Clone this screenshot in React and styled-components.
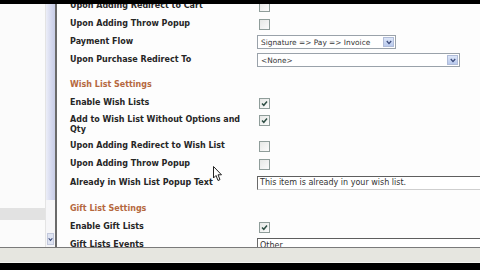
import React from "react";
import styled, { createGlobalStyle } from "styled-components";

const Global = createGlobalStyle`
  html, body { margin: 0; padding: 0; background: #000; overflow: hidden; }
  #root { width: 480px; height: 270px; }
`;

const Frame = styled.div`
  width: 480px; height: 270px; display: flex; flex-direction: column; background: #000;
  font-family: "DejaVu Sans", Verdana, sans-serif; position: relative;
`;
const BlackBar = styled.div` height: ${p => p.$h}px; background: #000; flex: none; `;
const Window = styled.div` flex: none; height: 243px; display: flex; overflow: hidden; `;
const LeftPane = styled.div`
  width: 46px; flex: none; background: #fbfbfb; border-right: 1px solid #e4e4e4;
  display: flex; flex-direction: column; padding-top: 200px; box-sizing: border-box;
`;
const Selected = styled.div` height: 12px; background: #e2e2e2; margin-top: 4px; `;
const ScrollCol = styled.div`
  width: 9px; flex: none; border-right: 2px solid #6a6a6a; background: #f6f6f8;
  display: flex; flex-direction: column; justify-content: space-between; padding-bottom: 2px;
`;
const Thumb = styled.div`
  height: 196px; background: linear-gradient(90deg, #eceef8, #d4d8ee 60%, #c8cde6);
`;
const ArrowBtn = styled.div`
  height: 10px; margin: 0 1px; background: #dfe4f2; border: 1px solid #c2c8dc;
  display: flex; align-items: center; justify-content: center;
`;
const Content = styled.div`
  flex: 1; background: #fdfdfd; overflow: hidden; padding-left: 13px;
`;
const List = styled.div` margin-top: -7px; display: flex; flex-direction: column; `;
const Row = styled.div`
  display: grid; grid-template-columns: 187px 1fr; align-items: ${p => p.$top ? "start" : "center"};
  height: ${p => p.$h || 18}px; box-sizing: border-box; padding-top: ${p => p.$pt || 0}px;
`;
const Label = styled.div`
  font-weight: bold; font-size: 8px; line-height: 10px; color: #262626; padding-right: 12px;
`;
const Header = styled.div`
  height: ${p => p.$h}px; display: flex; align-items: flex-end; padding-bottom: 4px; box-sizing: border-box;
  font-weight: bold; font-size: 8px; line-height: 10px; color: #b5683f;
`;
const Box = styled.div`
  width: 9px; height: 9px; margin-left: 2px; border: 1px solid #8f9d9a;
  background: linear-gradient(135deg, #e6e8e6, #fbfbfb); display: flex; align-items: center; justify-content: center;
`;
const Select = styled.div`
  width: ${p => p.$w}px; height: 14px; box-sizing: border-box; border: 1px solid #9aa2aa; background: #fff;
  display: flex; align-items: center; justify-content: space-between;
  font-size: 7.4px; color: #333; padding-left: 3px;
`;
const DropBtn = styled.div`
  width: 11px; height: 10px; margin-right: 1px; background: linear-gradient(#dde6f8, #b9c9ec);
  border: 1px solid #b0bcd8; box-sizing: border-box; display: flex; align-items: center; justify-content: center;
`;
const TextInput = styled.div`
  height: 14px; box-sizing: border-box; border: 1px solid #cfcfcf; border-top: 1px solid #5e5e5e;
  border-left: 1px solid #6a6a6a; background: #fff; font-size: 8px; color: #333; padding-left: 2px;
  display: flex; align-items: center; white-space: nowrap; overflow: hidden; margin-right: -20px;
`;
const Status = styled.div`
  flex: none; height: 16px; background: #e6e6e0; border-top: 1px solid #7a7a7a; border-bottom: 1px solid #f4f4f0; box-sizing: border-box;
`;
const Cursor = styled.svg` position: absolute; left: 213px; top: 166px; `;

const Check = ({ on }) => (
  <Box>
    {on && (
      <svg width="7" height="7" viewBox="0 0 7 7">
        <path d="M1 3.5 L2.8 5.3 L6 1.6" stroke="#2f4f45" strokeWidth="1.5" fill="none" />
      </svg>
    )}
  </Box>
);
const Chevron = () => (
  <svg width="6" height="5" viewBox="0 0 6 5"><path d="M0.8 1 L3 3.6 L5.2 1" stroke="#3a4a7a" strokeWidth="1.3" fill="none" /></svg>
);

export default function App() {
  return (
    <Frame>
      <Global />
      <BlackBar $h={4} />
      <Window>
        <LeftPane><Selected /></LeftPane>
        <ScrollCol>
          <Thumb />
          <ArrowBtn><Chevron /></ArrowBtn>
        </ScrollCol>
        <Content>
          <List>
            <Row><Label>Upon Adding Redirect to Cart</Label><Check /></Row>
            <Row><Label>Upon Adding Throw Popup</Label><Check /></Row>
            <Row><Label>Payment Flow</Label><Select $w={139}>Signature =&gt; Pay =&gt; Invoice<DropBtn><Chevron /></DropBtn></Select></Row>
            <Row><Label>Upon Purchase Redirect To</Label><Select $w={203}>&lt;None&gt;<DropBtn><Chevron /></DropBtn></Select></Row>
            <Header $h={25}>Wish List Settings</Header>
            <Row><Label>Enable Wish Lists</Label><Check on /></Row>
            <Row $h={25} $top $pt={3}><Label>Add to Wish List Without Options and Qty</Label><Check on /></Row>
            <Row><Label>Upon Adding Redirect to Wish List</Label><Check /></Row>
            <Row><Label>Upon Adding Throw Popup</Label><Check /></Row>
            <Row $h={19}><Label>Already in Wish List Popup Text</Label><TextInput>This item is already in your wish list.</TextInput></Row>
            <Header $h={26}>Gift List Settings</Header>
            <Row><Label>Enable Gift Lists</Label><Check on /></Row>
            <Row><Label>Gift Lists Events</Label><TextInput>Other</TextInput></Row>
          </List>
        </Content>
      </Window>
      <Status />
      <BlackBar $h={7} />
      <Cursor width="10" height="16" viewBox="0 0 10 16">
        <path d="M0.5 0.5 L0.5 12 L3 9.5 L5 14.5 L7 13.6 L5 8.8 L8.5 8.8 Z" fill="#fff" stroke="#222" strokeWidth="1" />
      </Cursor>
    </Frame>
  );
}
